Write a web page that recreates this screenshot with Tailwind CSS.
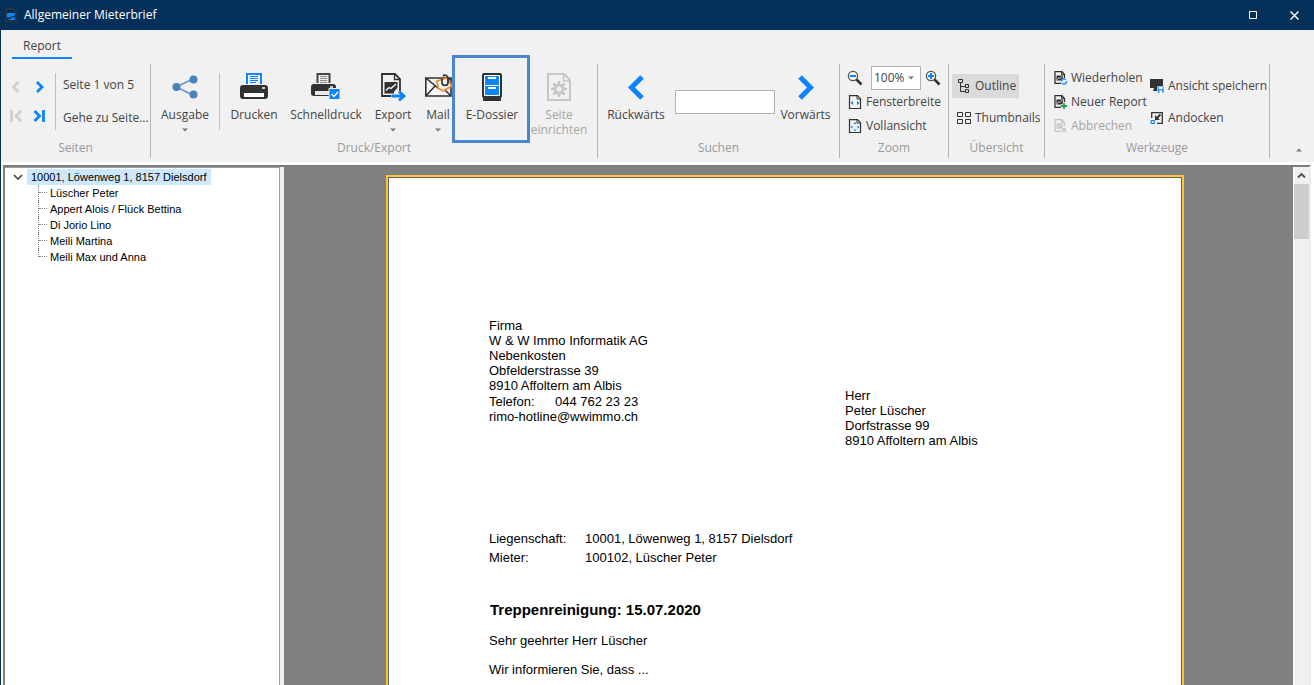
<!DOCTYPE html>
<html lang="de">
<head>
<meta charset="utf-8">
<title>Allgemeiner Mieterbrief</title>
<script src="https://cdn.jsdelivr.net/npm/@tailwindcss/browser@4"></script>
</head>
<body class="bg-white">
<svg width="0" height="0" class="absolute" aria-hidden="true">
  <symbol id="page" viewBox="0 0 14 14">
    <path d="M1.500.7h8l3 3v9.800h-11z" fill="none" stroke="currentColor" stroke-width="1.200"/>
    <path d="M9 .5v3.500h3.500" fill="none" stroke="currentColor"/>
  </symbol>
  <symbol id="report" viewBox="0 0 14 14">
    <path d="M10.500 7V3.500L8 .7H1v11.600h6" fill="none" stroke="currentColor" stroke-width="1.300"/>
    <path d="M7.500.7v3h3" fill="none" stroke="currentColor"/>
    <path d="M2.500 4.500H9V8L7.500 9.500h-5z" fill="currentColor"/>
    <path d="M3 8.500l2-1.700 1 .5 2.500-2" fill="none" stroke="#f1f1f1" stroke-width=".8"/>
  </symbol>
  <symbol id="caret" viewBox="0 0 6 4"><path d="M0 .5h6l-3 3z" fill="#777"/></symbol>
</svg>
<div class="flex h-screen flex-col overflow-hidden border-l border-[#04305a] bg-white font-['Open_Sans','Noto_Sans',sans-serif] text-xs text-[#444]">
  <header class="flex h-[30px] shrink-0 items-center bg-[#04305a] pl-1 text-white">
    <svg width="12" height="14" viewBox="0 0 12 14"><path d="M1 1h7l3 3v9H1z" fill="#06284a" stroke="#33363b" stroke-width="1.500"/><path d="M2 5h8v2L8 8.500H6L4.500 9.500H2z" fill="#0a84ff"/><path d="M2 12l3-1 1.500-1.500H10V12z" fill="#0a84ff"/></svg>
    <h1 class="ml-[7px]">Allgemeiner Mieterbrief</h1>
    <div class="ml-auto flex h-full">
      <button aria-label="Maximieren" class="grid w-[42px] place-items-center"><svg width="9" height="9"><path d="M.5.5h7v7h-7z" fill="none" stroke="#fff"/></svg></button>
      <button aria-label="Schliessen" class="grid w-10 place-items-center"><svg width="9" height="9"><path d="M.5.5l8 8M8.500.5l-8 8" stroke="#fff" stroke-width="1.400"/></svg></button>
    </div>
  </header>

  <nav class="h-[34px] shrink-0 bg-[#f1f1f1] pl-[11px]">
    <button class="mt-[5px] h-6 w-[60px] border-b-2 border-[#0a84ff]">Report</button>
  </nav>

  <div class="flex h-[98px] shrink-0 bg-[#f1f1f1] whitespace-nowrap">
    <section class="flex h-[94px] w-[150px] flex-col border-r border-[#b2b2b2]">
      <div class="flex flex-1 pt-[9px]">
        <div class="grid h-[57px] w-[55px] grid-cols-2 place-items-center border-r border-[#c0c0c0] pr-1 pl-[3px]">
          <button aria-label="Vorige Seite"><svg width="12" height="12"><path d="M8.500 1L3.500 6l5 5" fill="none" stroke="#cfcfcf" stroke-width="2.800"/></svg></button>
          <button aria-label="Nächste Seite"><svg width="12" height="12"><path d="M4 1l5 5-5 5" fill="none" stroke="#0a84ff" stroke-width="2.800"/></svg></button>
          <button aria-label="Erste Seite"><svg width="12" height="12"><path d="M11 1L6 6l5 5M1.500 0v12" fill="none" stroke="#cfcfcf" stroke-width="2.800"/></svg></button>
          <button aria-label="Letzte Seite"><svg width="12" height="12"><path d="M1.500 1l5 5-5 5M10.500 0v12" fill="none" stroke="#0a84ff" stroke-width="2.800"/></svg></button>
        </div>
        <div class="flex h-[57px] flex-col items-start justify-between pl-[7px]">
          <span class="leading-6">Seite 1 von 5</span>
          <button class="leading-6">Gehe zu Seite...</button>
        </div>
      </div>
      <h2 class="h-[18px] text-center leading-4 text-[#9a9a9a]">Seiten</h2>
    </section>

    <section class="flex h-[94px] w-[447px] flex-col border-r border-[#b2b2b2]">
      <div class="flex flex-1 items-start">
        <button class="flex w-[68px] flex-col items-center pt-2">
          <svg width="28" height="30" viewBox="0 0 28 30"><path d="M22 7L5 15l17 8" fill="none" stroke="#6b96c8" stroke-width="1.700"/><g fill="#4a82bd"><circle cx="5.500" cy="15" r="4"/><circle cx="22.500" cy="7.500" r="4"/><circle cx="22.500" cy="22.500" r="4"/></g></svg>
          <span class="mt-[5px] leading-4">Ausgabe</span><svg class="mt-[5px]" width="6" height="4"><use href="#caret"/></svg>
        </button>
        <div class="mt-[9px] h-[57px] w-px bg-[#c0c0c0]"></div>
        <button class="flex w-[68px] flex-col items-center pt-2">
          <svg width="28" height="30" viewBox="0 0 28 30"><path d="M7 12V2h14v10" fill="none" stroke="#0a84ff" stroke-width="2"/><path d="M10 4.500h8M10 6.500h8M10 8.500h8M10 10.500h6" stroke="#0a84ff"/><path d="M3 13h22a3 3 0 0 1 3 3v8a3 3 0 0 1-3 3H3a3 3 0 0 1-3-3v-8a3 3 0 0 1 3-3z" fill="#323232"/><path d="M4 21h20v4H4z" fill="#fff"/><path d="M22 16h3" stroke="#fff" stroke-width="1.500"/></svg>
          <span class="mt-[5px] leading-4">Drucken</span>
        </button>
        <button class="flex w-[76px] flex-col items-center pt-2">
          <svg width="30" height="30" viewBox="0 0 30 30"><path d="M6.500 11V2h12v9" fill="none" stroke="#444" stroke-width="2"/><path d="M9 4.500h7M9 6.500h7M9 8.500h7M9 10.500h7" stroke="#888"/><path d="M3 12h19a3 3 0 0 1 3 3v6a3 3 0 0 1-3 3H3a3 3 0 0 1-3-3v-6a3 3 0 0 1 3-3z" fill="#323232"/><path d="M4 19h15v4H4z" fill="#e8e8e8"/><path d="M19 15h3" stroke="#fff" stroke-width="1.500"/><path d="M18 16.500h11v11H18z" fill="#0a84ff" stroke="#f1f1f1"/><path d="M20.500 22l2.500 2.500 4-4.500" fill="none" stroke="#fff" stroke-width="1.500"/></svg>
          <span class="mt-[5px] leading-4">Schnelldruck</span>
        </button>
        <button class="flex w-[58px] flex-col items-center pt-2">
          <svg width="28" height="30" viewBox="0 0 28 30"><path d="M12 24H3V2h13l5 5v12" fill="none" stroke="#323232" stroke-width="1.800"/><path d="M15.500 2v5.500H21" fill="none" stroke="#323232" stroke-width="1.300"/><path d="M5.500 10h13v6l-3.500 3.500v2H5.500z" fill="#323232"/><path d="M7 18.500l3-3 2 1 5-4.500" fill="none" stroke="#fff" stroke-width="1.300"/><path d="M12.500 24H24M20 19.500l5 4.500-5 4.500" fill="none" stroke="#0a84ff" stroke-width="3"/></svg>
          <span class="mt-[5px] leading-4">Export</span><svg class="mt-[5px]" width="6" height="4"><use href="#caret"/></svg>
        </button>
        <button class="flex w-8 flex-col items-center pt-2">
          <svg width="28" height="30" viewBox="0 0 28 30"><path d="M1.800 6H27v18H1.800zM1.800 6L14 16 27 6M1.800 24L11 14M27 24L17 14" fill="#f7f7f7" stroke="#323232" stroke-width="1.600"/><path d="M13 9l10-3 5 8-9 5-5-3z" fill="#f6f6f6" stroke="#f28c1e" stroke-width="1.800"/><path d="M18 6.500v4a3 3 0 0 0 6 0V6a3 3 0 0 0-5-2" fill="none" stroke="#323232" stroke-width="1.700"/></svg>
          <span class="mt-[5px] leading-4">Mail</span><svg class="mt-[5px]" width="6" height="4"><use href="#caret"/></svg>
        </button>
        <button class="relative flex w-[76px] flex-col items-center pt-2">
          <svg width="28" height="30" viewBox="0 0 28 30"><rect x="4" y="1" width="20" height="25" rx="2" fill="#323232"/><path d="M5 25h18v4H5z" fill="#323232"/><path d="M6.500 3.500h15v20h-15z" fill="#0a84ff" stroke="#fff"/><path d="M6 13.500h16" stroke="#fff"/><path d="M10 6h8M10 16h8" stroke="#fff" stroke-width="2"/></svg>
          <span class="mt-[5px] leading-4">E-Dossier</span>
          <span class="absolute -top-[9px] -left-0.5 h-[88px] w-[78px] border-3 border-[#4a86d4]"></span>
        </button>
        <button disabled class="flex w-[58px] flex-col items-center pt-2 text-[#a5a5a5]">
          <svg width="28" height="30" viewBox="0 0 28 30" fill="none" stroke="#c6c6c6"><path d="M3 2h16l6 6v20H3z" stroke-width="2"/><path d="M18.500 2v7H25" stroke-width="1.500"/><circle cx="14" cy="17" r="4" stroke-width="3"/><path d="M14 9v4M14 21v4M6 17h4M18 17h4M8.300 11.300l3 3M16.700 19.700l3 3M19.700 11.300l-3 3M11.300 19.700l-3 3" stroke-width="2.600"/></svg>
          <span class="mt-[5px] leading-[15px]">Seite<br>einrichten</span>
        </button>
      </div>
      <h2 class="h-[18px] text-center leading-4 text-[#9a9a9a]">Druck/Export</h2>
    </section>

    <section class="flex h-[94px] w-[242px] flex-col border-r border-[#b2b2b2]">
      <div class="flex flex-1 items-start">
        <button class="flex w-[76px] flex-col items-center pt-2">
          <svg width="28" height="30" viewBox="0 0 28 30"><path d="M20 5L9.500 15.500 20 26" fill="none" stroke="#0a84ff" stroke-width="5"/></svg>
          <span class="mt-[5px] leading-4">Rückwärts</span>
        </button>
        <input aria-label="Suchen" class="mt-[26px] ml-px h-6 w-[100px] border border-[#b2b2b2] bg-white px-1">
        <button class="flex w-[61px] flex-col items-center pt-2">
          <svg width="28" height="30" viewBox="0 0 28 30"><path d="M8 5l10.500 10.500L8 26" fill="none" stroke="#0a84ff" stroke-width="5"/></svg>
          <span class="mt-[5px] leading-4">Vorwärts</span>
        </button>
      </div>
      <h2 class="h-[18px] text-center leading-4 text-[#9a9a9a]">Suchen</h2>
    </section>

    <section class="flex h-[94px] w-[109px] flex-col border-r border-[#b2b2b2]">
      <div class="flex-1 pt-0.5 pl-[7px]">
        <div class="flex h-6 items-center">
          <button aria-label="Verkleinern"><svg width="16" height="16"><path d="M9 9l5.500 5.500" stroke="#323232" stroke-width="2.500"/><circle cx="6" cy="6" r="4.600" fill="#f8f8f8" stroke="#555" stroke-width="1.300"/><path d="M3 6h6" stroke="#0a84ff" stroke-width="2"/></svg></button>
          <div class="relative ml-2 h-6 w-[50px]">
            <select aria-label="Zoomfaktor" class="h-6 w-[50px] appearance-none border border-[#b2b2b2] bg-white pl-0.5"><option>100%</option></select>
            <svg class="pointer-events-none absolute top-[10px] right-[7px]" width="6" height="4"><use href="#caret"/></svg>
          </div>
          <button aria-label="Vergrössern" class="ml-1"><svg width="16" height="16"><path d="M9 9l5.500 5.500" stroke="#323232" stroke-width="2.500"/><circle cx="6" cy="6" r="4.600" fill="#f8f8f8" stroke="#555" stroke-width="1.300"/><path d="M3 6h6M6 3v6" stroke="#0a84ff" stroke-width="2"/></svg></button>
        </div>
        <button class="flex h-6 items-center gap-1 pl-px"><svg class="text-[#323232]" width="14" height="14"><use href="#page"/><path d="M5 6v4L2.500 8zM9 6v4l2.500-2z" fill="#0a84ff"/></svg>Fensterbreite</button>
        <button class="flex h-6 items-center gap-1 pl-px"><svg class="text-[#323232]" width="14" height="14"><use href="#page"/><path d="M4.500 6.500v3L2.500 8zM9.500 6.500v3l2-1.500zM5.500 5h3L7 3zM5.500 10.500h3L7 12.500z" fill="#0a84ff"/></svg>Vollansicht</button>
      </div>
      <h2 class="h-[18px] text-center leading-4 text-[#9a9a9a]">Zoom</h2>
    </section>

    <section class="flex h-[94px] w-24 flex-col border-r border-[#b2b2b2]">
      <div class="flex flex-1 flex-col items-start gap-2 pt-[10px] pl-[3px]">
        <button class="flex h-6 items-center gap-1 bg-[#dadada] pr-[3px] pl-[5px]"><svg width="14" height="14" fill="none" stroke="#323232"><path d="M1.500.5h4v3h-4zM8.500 5.500h3v3h-3zM8.500 10.500h3v3h-3zM3.500 4v8.500h5M3.500 7.500h5"/></svg>Outline</button>
        <button class="flex h-6 items-center gap-1 pl-[5px]"><svg width="14" height="12" fill="none" stroke="#323232"><path d="M.5.5h5v4h-5zM8.500.5h5v4h-5zM.5 7.500h5v4h-5zM8.500 7.500h5v4h-5z"/></svg>Thumbnails</button>
      </div>
      <h2 class="h-[18px] text-center leading-4 text-[#9a9a9a]">Übersicht</h2>
    </section>

    <section class="flex h-[94px] w-[225px] flex-col border-r border-[#b2b2b2]">
      <div class="flex flex-1 pl-[9px]">
        <div class="w-24 pt-0.5">
          <button class="flex h-6 items-center gap-[3px]"><svg class="text-[#323232]" width="14" height="14"><use href="#report"/><circle cx="10" cy="10.500" r="2.500" fill="#f1f1f1" stroke="#3a93f0" stroke-width="1.600" stroke-dasharray="6 1.500"/></svg>Wiederholen</button>
          <button class="flex h-6 items-center gap-[3px]"><svg class="text-[#323232]" width="14" height="14"><use href="#report"/><path d="M10 8v6M7 11h6" stroke="#22a04a" stroke-width="1.800"/></svg>Neuer Report</button>
          <button disabled class="flex h-6 items-center gap-[3px] text-[#a5a5a5]"><svg class="text-[#c4c4c4]" width="14" height="14"><use href="#report"/><path d="M8 9l4 4M12 9l-4 4" stroke="#c4c4c4" stroke-width="1.500"/></svg>Abbrechen</button>
        </div>
        <div class="flex flex-col gap-2 pt-[10px]">
          <button class="flex h-6 items-center gap-1"><svg width="14" height="14"><path d="M0 0h13v9H0zM4 9h5v3H3z" fill="#323232"/><path d="M7.500 7.500H14V14H7.500z" fill="#3a93f0" stroke="#f1f1f1" stroke-width=".6"/><path d="M9 8h3.500v2H9zM9.500 11.500h2.500V14H9.500z" fill="#fff"/></svg>Ansicht speichern</button>
          <button class="flex h-6 items-center gap-1"><svg width="14" height="14"><path d="M1.700 7V1.700h10.600v10.600H7" fill="none" stroke="#323232" stroke-width="1.300"/><path d="M10.500 3.500L7 7" stroke="#323232" stroke-width="2"/><path d="M5 4v5h5z" fill="#323232"/><path d="M1.200 9.500h3v3h-3z" fill="#fff" stroke="#0a84ff" stroke-width="1.200"/></svg>Andocken</button>
        </div>
      </div>
      <h2 class="h-[18px] text-center leading-4 text-[#9a9a9a]">Werkzeuge</h2>
    </section>
    <button aria-label="Menüband einklappen" class="ml-auto flex items-end pr-3 pb-[10px]"><svg width="6" height="4"><path d="M0 3.500h6l-3-3z" fill="#777"/></svg></button>
  </div>

  <main class="mt-[3px] mr-[3px] ml-0.5 flex min-h-0 flex-1 border-t-2 border-r-2 border-l-2 border-t-[#7c7c7c] border-r-[#ececec] border-l-[#808080]">
    <aside class="w-[275px] shrink-0 border-t border-r border-[#a0a0a0] bg-white pt-px pl-2 font-['Liberation_Sans',sans-serif] text-[11px] leading-4 text-black">
      <div class="flex items-center"><svg width="10" height="8"><path d="M1 2l4 4 4-4" fill="none" stroke="#444" stroke-width="1.600"/></svg><span class="ml-1 bg-[#cce8ff] px-1">10001, Löwenweg 1, 8157 Dielsdorf</span></div>
      <ul class="pl-[25px]">
        <li class="flex"><i class="h-4 w-px border-l border-dotted border-[#808080]"></i><i class="mr-[3px] h-2 w-2 border-b border-dotted border-[#808080]"></i>Lüscher Peter</li>
        <li class="flex"><i class="h-4 w-px border-l border-dotted border-[#808080]"></i><i class="mr-[3px] h-2 w-2 border-b border-dotted border-[#808080]"></i>Appert Alois / Flück Bettina</li>
        <li class="flex"><i class="h-4 w-px border-l border-dotted border-[#808080]"></i><i class="mr-[3px] h-2 w-2 border-b border-dotted border-[#808080]"></i>Di Jorio Lino</li>
        <li class="flex"><i class="h-4 w-px border-l border-dotted border-[#808080]"></i><i class="mr-[3px] h-2 w-2 border-b border-dotted border-[#808080]"></i>Meili Martina</li>
        <li class="flex"><i class="h-2 w-px border-l border-dotted border-[#808080]"></i><i class="mr-[3px] h-2 w-2 border-b border-dotted border-[#808080]"></i>Meili Max und Anna</li>
      </ul>
    </aside>
    <div class="w-1 shrink-0 bg-[#f0f0f0]"></div>
    <div class="flex min-w-0 flex-1 justify-center overflow-hidden bg-[#808080] pt-2 pr-[7px]">
      <article class="min-h-[1120px] w-[798px] shrink-0 border-2 border-[#ffc33c] bg-white font-['Liberation_Sans',sans-serif] text-[13px] leading-[15px] text-black">
        <div class="min-h-full border border-[#606060] pt-[140px] pl-[100px]">
          <address class="not-italic">Firma<br>W &amp; W Immo Informatik AG<br>Nebenkosten<br>Obfelderstrasse 39<br>8910 Affoltern am Albis
            <div class="mt-px flex"><span class="w-[66px]">Telefon:</span>044 762 23 23</div>
            rimo-hotline@wwimmo.ch</address>
          <address class="-mt-9 ml-[356px] not-italic">Herr<br>Peter Lüscher<br>Dorfstrasse 99<br>8910 Affoltern am Albis</address>
          <dl class="mt-[81px] grid grid-cols-[96px_1fr] leading-[19px]"><dt>Liegenschaft:</dt><dd>10001, Löwenweg 1, 8157 Dielsdorf</dd><dt>Mieter:</dt><dd>100102, Lüscher Peter</dd></dl>
          <h3 class="mt-[33px] pl-px text-[15px] leading-5 font-bold">Treppenreinigung: 15.07.2020</h3>
          <p class="mt-[13px]">Sehr geehrter Herr Lüscher</p>
          <p class="mt-[14px]">Wir informieren Sie, dass ...</p>
        </div>
      </article>
    </div>
    <div class="flex w-4 shrink-0 flex-col border-l border-white bg-[#f0f0f0]">
      <button aria-label="Nach oben" class="grid h-[17px] place-items-center"><svg width="9" height="7"><path d="M1 5.500L4.500 2 8 5.500" fill="none" stroke="#505050" stroke-width="1.800"/></svg></button>
      <div class="h-[55px] bg-[#cdcdcd]"></div>
    </div>
  </main>
</div>
</body>
</html>
